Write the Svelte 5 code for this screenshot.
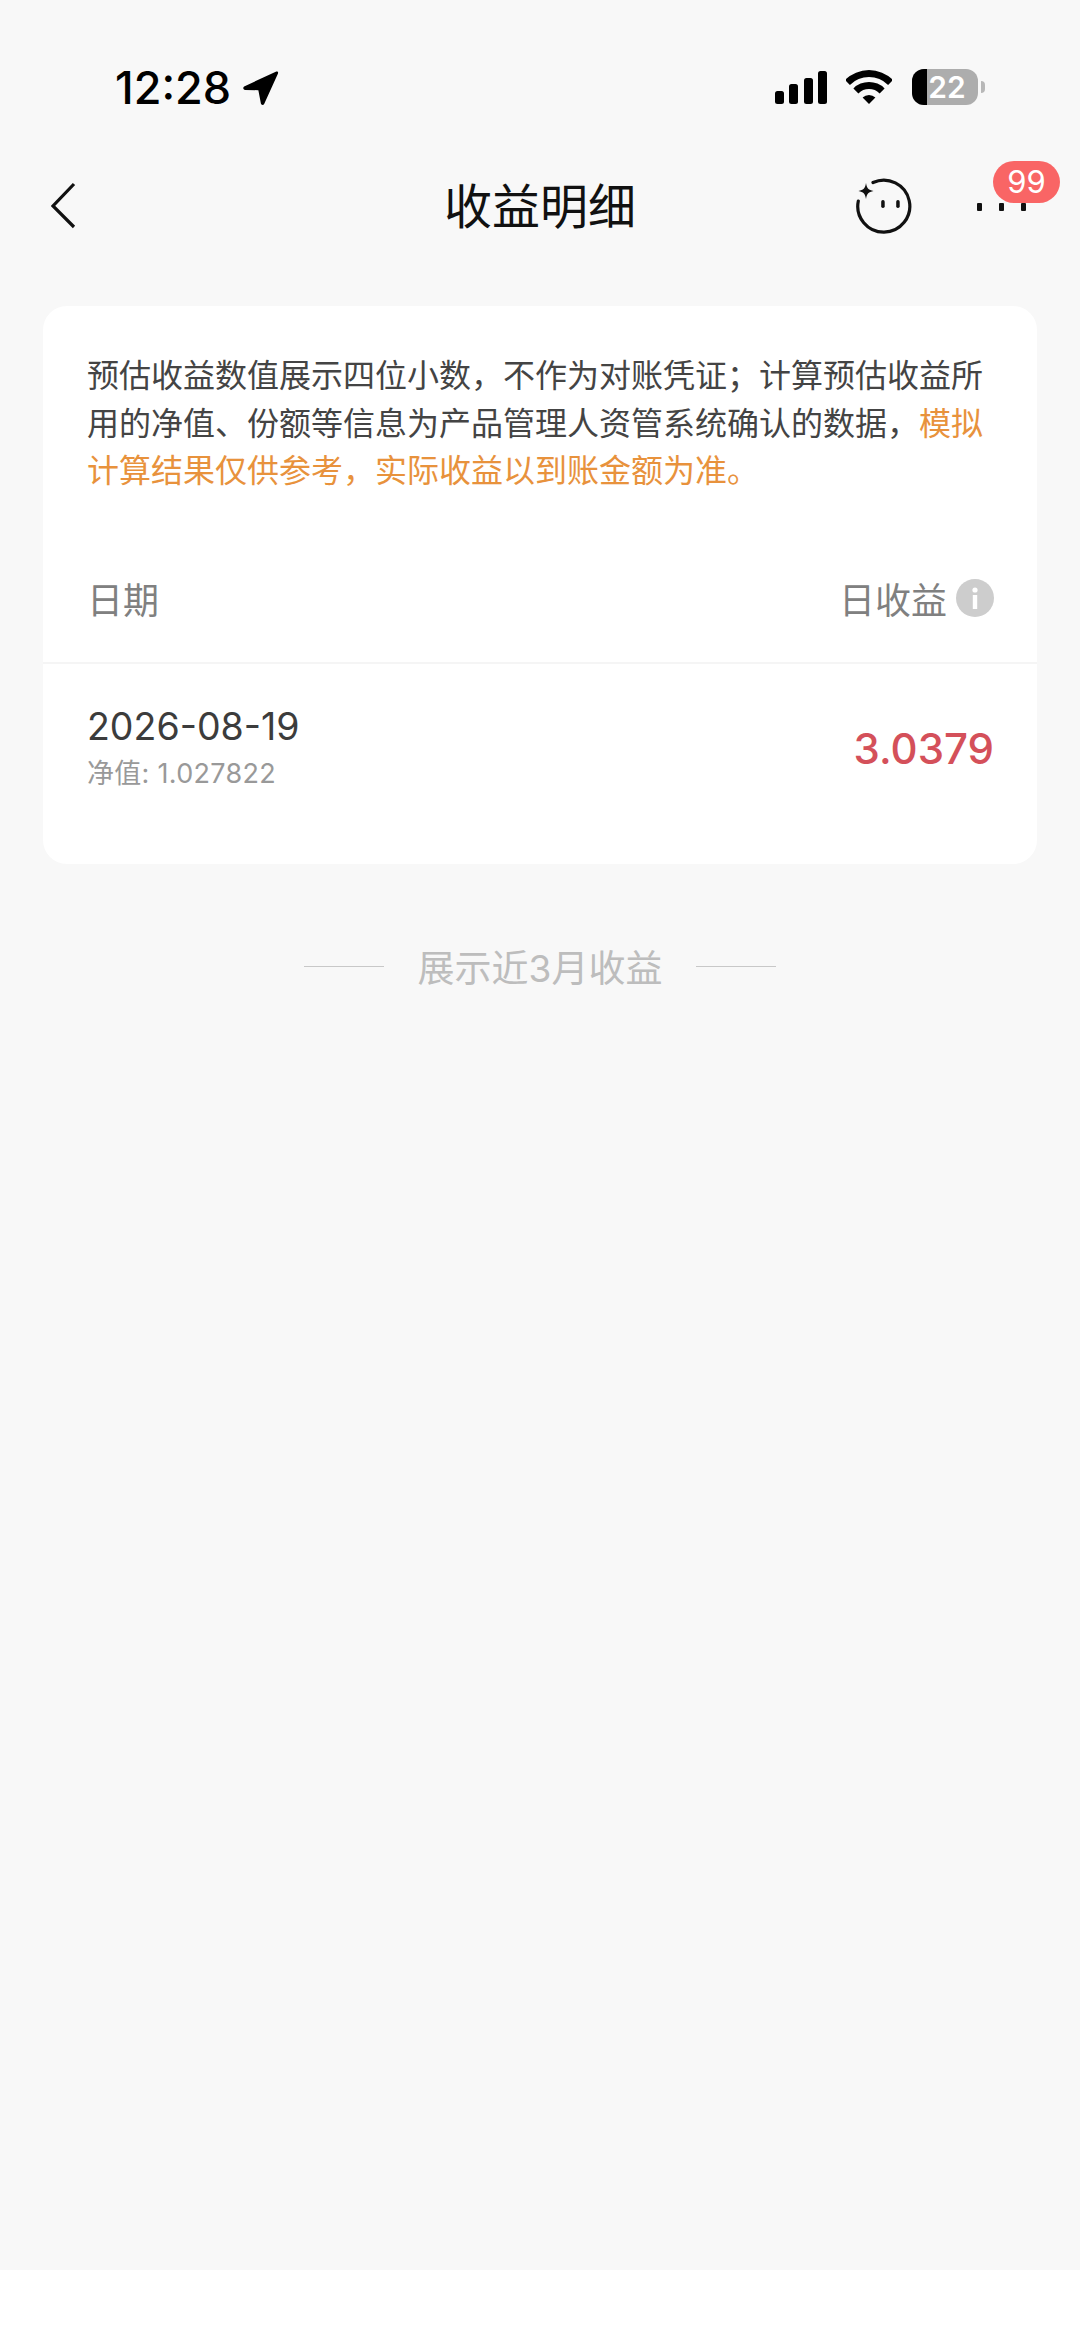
<script>
  const rows = [{ date: '2026-08-19', nav: '1.027822', amount: '3.0379' }]
</script>

<div class="page">
  <main class="content">
    <div class="status">
      <div class="time">
        <span>12:28</span>
        <svg width="38" height="38" viewBox="0 0 36 36"><path d="M2 17.500 32 3.500c1.600-.7 2.700.4 2 2L21 34c-.7 1.500-2.800 1.300-3.100-.3L15.500 21 3 20.800c-1.900-.1-2.400-2.500-1-3.300z" fill="#000"/></svg>
      </div>
      <div class="indicators">
        <svg width="52" height="33" viewBox="0 0 52 33">
          <rect x="0" y="20" width="9" height="13" rx="2.500"/>
          <rect x="14" y="13" width="9" height="20" rx="2.500"/>
          <rect x="29" y="7" width="9" height="26" rx="2.500"/>
          <rect x="43" y="0" width="9" height="33" rx="2.500"/>
        </svg>
        <svg class="wifi" width="46" height="34" viewBox="0 0 46 34">
          <path d="M-1 10A34 34 0 0 1 47 10L42.100 14.900A27 27 0 0 0 3.900 14.900z"/>
          <path d="M7.400 18.400A22 22 0 0 1 38.600 18.400L33.600 23.400A15 15 0 0 0 12.400 23.400z"/>
          <path d="M16.600 27.600A9 9 0 0 1 29.400 27.600L23 34z"/>
        </svg>
        <div class="battery">
          <div class="level"></div>
          <span>22</span>
        </div>
        <div class="nub"></div>
      </div>
    </div>

    <header class="nav">
      <svg class="back" width="26" height="48" viewBox="0 0 26 48"><path d="M23 2 2 24l21 21" fill="none" stroke="#111" stroke-width="3.200"/></svg>
      <h1>收益明细</h1>
      <div class="actions">
        <svg width="60" height="60" viewBox="0 0 60 60">
          <path d="M19 6.500A26 26 0 1 1 4.300 25" fill="none" stroke="#111" stroke-width="3.200" stroke-linecap="round"/>
          <path d="M12 7c1 5.500 2.500 7 7.500 8-5 1-6.500 2.500-7.500 8-1-5.500-2.500-7-7.500-8 5-1 6.500-2.500 7.500-8z" fill="#111"/>
          <rect x="27.200" y="24" width="3.500" height="8" rx="1.700" fill="#111"/>
          <rect x="42.200" y="24" width="3.500" height="8" rx="1.700" fill="#111"/>
        </svg>
        <div class="more">
          <i></i><i></i><i></i>
          <span class="badge">99</span>
        </div>
      </div>
    </header>

    <section class="card">
      <p class="notice">预估收益数值展示四位小数，不作为对账凭证；计算预估收益所用的净值、份额等信息为产品管理人资管系统确认的数据，<em>模拟计算结果仅供参考，实际收益以到账金额为准。</em></p>
      <div class="thead">
        <span>日期</span>
        <div class="thead-right">
          <span>日收益</span>
          <svg width="38" height="38" viewBox="0 0 38 38">
            <circle cx="19" cy="19" r="19" fill="#cdcdcd"/>
            <circle cx="19" cy="11" r="2.600" fill="#fff"/>
            <rect x="16.800" y="16" width="4.400" height="14" fill="#fff"/>
          </svg>
        </div>
      </div>
      {#each rows as row}
        <div class="row">
          <div>
            <div class="date">{row.date}</div>
            <div class="nav-value">净值: {row.nav}</div>
          </div>
          <div class="amount">{row.amount}</div>
        </div>
      {/each}
    </section>

    <div class="foot">
      <span class="rule"></span>
      <span>展示近3月收益</span>
      <span class="rule"></span>
    </div>
  </main>
  <div class="home"></div>
</div>

<style>
  :global(body) {
    margin: 0;
  }
  .page {
    display: flex;
    flex-direction: column;
    width: 1080px;
    height: 2348px;
    overflow: hidden;
    background: #fff;
    font-family: "Inter", "Noto Sans CJK SC", sans-serif;
  }
  .content {
    flex: 1;
    background: #f8f8f8;
  }
  .home {
    height: 78px;
  }
  .status {
    display: flex;
    justify-content: space-between;
    align-items: center;
    height: 40px;
    padding: 67px 95px 0 115px;
  }
  .time {
    display: flex;
    align-items: center;
    gap: 11px;
    font-size: 45px;
    font-weight: 500;
    color: #000;
  }
  .indicators {
    display: flex;
    align-items: center;
  }
  .wifi {
    margin: 0 20px 0 19px;
  }
  .battery {
    position: relative;
    width: 66px;
    height: 36px;
    border-radius: 12px;
    overflow: hidden;
    background: #adadad;
    display: flex;
    align-items: center;
    justify-content: center;
    color: #fff;
    font-size: 30px;
    font-weight: 600;
  }
  .level {
    position: absolute;
    left: 0;
    top: 0;
    bottom: 0;
    width: 15px;
    background: #000;
  }
  .battery span {
    position: relative;
    margin-left: 4px;
  }
  .nub {
    width: 4px;
    height: 12px;
    margin-left: 3px;
    border-radius: 0 4px 4px 0;
    background: #b8b8b8;
  }
  .nav {
    display: grid;
    grid-template-columns: minmax(0, 1fr) auto minmax(0, 1fr);
    align-items: center;
    height: 72px;
    margin-top: 61px;
    padding: 0 20px;
  }
  .back {
    margin-left: 31px;
  }
  .nav h1 {
    margin: 0;
    padding-bottom: 6px;
    font-size: 48px;
    font-weight: 400;
    color: #111;
    font-family: "Noto Sans CJK SC", sans-serif;
  }
  .actions {
    display: flex;
    align-items: center;
    justify-content: flex-end;
  }
  .more {
    position: relative;
    display: flex;
    gap: 17px;
    width: 83px;
    margin-left: 63px;
    padding-top: 2px;
  }
  .more i {
    width: 5px;
    height: 8px;
    background: #111;
    border-radius: 1px;
  }
  .badge {
    position: absolute;
    left: 16px;
    top: -40px;
    width: 67px;
    height: 42px;
    border-radius: 21px;
    background: #f96565;
    color: #fff;
    font-size: 31px;
    line-height: 42px;
    text-align: center;
  }
  .card {
    margin: 66px 43px 0;
    height: 558px;
    background: #fff;
    border-radius: 24px;
    box-sizing: border-box;
  }
  .notice {
    margin: 0;
    padding: 44px 44px 0;
    font-size: 32px;
    line-height: 47.500px;
    color: #444;
    font-family: "Noto Sans CJK SC", sans-serif;
    font-weight: 400;
  }
  .notice em {
    font-style: normal;
    color: #e8923c;
  }
  .thead {
    display: flex;
    justify-content: space-between;
    align-items: center;
    height: 122px;
    margin-top: 44px;
    padding: 0 43px 3px 44px;
    border-bottom: 2px solid #f5f5f5;
    font-size: 36px;
    color: #808080;
    font-family: "Noto Sans CJK SC", sans-serif;
  }
  .thead-right {
    display: flex;
    align-items: center;
    gap: 9px;
  }
  .row {
    display: flex;
    justify-content: space-between;
    align-items: center;
    padding: 38px 43px 0 44px;
  }
  .date {
    font-size: 37.500px;
    line-height: 50px;
    color: #3c3c3c;
  }
  .nav-value {
    font-size: 27px;
    line-height: 36px;
    margin-top: 4px;
    color: #999;
    letter-spacing: 0.300px;
    font-family: "Inter", "Noto Sans CJK SC", sans-serif;
  }
  .amount {
    margin-top: 3px;
    font-size: 42px;
    font-weight: 500;
    color: #d4505a;
  }
  .foot {
    display: flex;
    justify-content: center;
    align-items: center;
    gap: 34px;
    margin-top: 75px;
    font-size: 37px;
    color: #bdbdbd;
    font-family: "Inter", "Noto Sans CJK SC", sans-serif;
  }
  .rule {
    width: 80px;
    height: 1px;
    background: #c8c8c8;
  }
</style>
